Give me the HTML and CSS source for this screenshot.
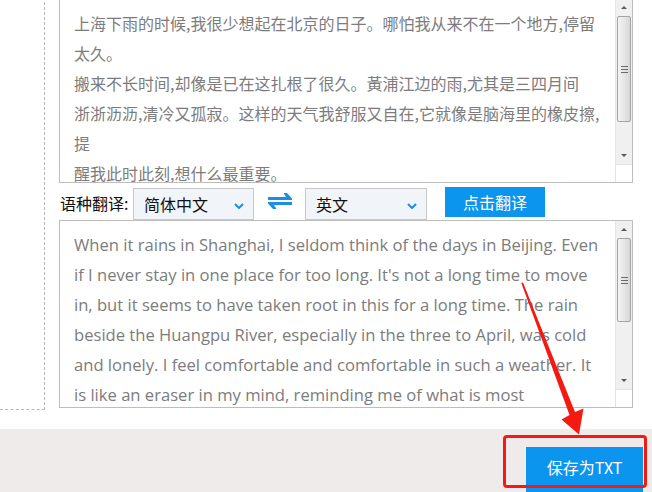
FILE: index.html
```html
<!DOCTYPE html>
<html lang="zh-CN">
<head>
<meta charset="utf-8">
<title>语种翻译</title>
<link rel="stylesheet" href="styles.css">
</head>
<body>
<div class="page">
  <div class="main">
    <div class="side"></div>
    <div class="content">
      <div class="box box-top">
        <div class="text zh">
          <div class="line">上海下雨的时候,我很少想起在北京的日子。哪怕我从来不在一个地方,停留</div>
          <div class="line">太久。</div>
          <div class="line">搬来不长时间,却像是已在这扎根了很久。黃浦江边的雨,尤其是三四月间</div>
          <div class="line">浙浙沥沥,清冷又孤寂。这样的天气我舒服又自在,它就像是脑海里的橡皮擦,</div>
          <div class="line">提</div>
          <div class="line">醒我此时此刻,想什么最重要。</div>
        </div>
        <div class="scrollbar sb-top">
          <div class="sb-btn"><span class="tri-up"></span></div>
          <div class="sb-thumb"><span class="grip"></span></div>
          <div class="sb-track"></div>
          <div class="sb-btn"><span class="tri-down"></span></div>
          <div class="sb-corner"></div>
        </div>
      </div>

      <div class="row">
        <span class="label">语种翻译:</span>
        <div class="select sel-1"><span>简体中文</span>
          <svg class="chev" width="10" height="6" viewBox="0 0 10 6"><path d="M1 1 L5 5 L9 1" fill="none" stroke="#1a8fe3" stroke-width="2"/></svg>
        </div>
        <svg class="swap" width="24" height="16" viewBox="0 0 24 16">
          <polygon points="0,4 18,4 15.5,0 19,0 24,5.5 24,7 0,7" fill="#1b8fe6"/>
          <polygon points="0,9 24,9 24,12 6,12 8.5,16 5,16 0,10.5" fill="#1b8fe6"/>
        </svg>
        <div class="select sel-2"><span>英文</span>
          <svg class="chev" width="10" height="6" viewBox="0 0 10 6"><path d="M1 1 L5 5 L9 1" fill="none" stroke="#1a8fe3" stroke-width="2"/></svg>
        </div>
        <button class="btn btn-translate">点击翻译</button>
      </div>

      <div class="box box-bottom">
        <div class="text en">
          <div class="line">When it rains in Shanghai, I seldom think of the days in Beijing. Even</div>
          <div class="line">if I never stay in one place for too long. It's not a long time to move</div>
          <div class="line">in, but it seems to have taken root in this for a long time. The rain</div>
          <div class="line">beside the Huangpu River, especially in the three to April, was cold</div>
          <div class="line">and lonely. I feel comfortable and comfortable in such a weather. It</div>
          <div class="line">is like an eraser in my mind, reminding me of what is most</div>
        </div>
        <div class="scrollbar sb-bottom">
          <div class="sb-btn"><span class="tri-up"></span></div>
          <div class="sb-thumb"><span class="grip"></span></div>
          <div class="sb-track"></div>
          <div class="sb-btn"><span class="tri-down"></span></div>
          <div class="sb-corner"></div>
        </div>
      </div>
    </div>
  </div>

  <div class="footer">
    <button class="btn btn-save">保存为TXT</button>
  </div>

  <div class="mark-box"></div>
  <svg class="mark-arrow" width="652" height="492" viewBox="0 0 652 492">
    <polygon points="521.3,283 523,282.6 575,412 583.5,408.5 579,434.5 561.5,419.5 569.5,415" fill="#f41a12"/>
  </svg>
</div>
</body>
</html>
```

FILE: styles.css
```css
* { box-sizing: border-box; }

html, body {
  margin: 0;
  padding: 0;
  background: #ffffff;
  overflow: hidden;
}

body {
  width: 652px;
  height: 492px;
  font-family: "Noto Sans CJK SC", "Open Sans", sans-serif;
}

.page {
  position: relative;
  width: 652px;
  height: 492px;
  overflow: hidden;
}

.main {
  display: flex;
  height: 432px;
  margin-top: -3px;
}

.side {
  width: 45px;
  height: 413px;
  border-right: 1px dashed #b9b9b9;
  border-bottom: 1px dashed #b9b9b9;
  flex: none;
}

.content {
  margin-left: 14px;
  width: 574px;
  display: flex;
  flex-direction: column;
}

.box {
  display: flex;
  border: 1px solid #bdbdbd;
  overflow: hidden;
  background: #fff;
}

.box-top { height: 186px; }
.box-bottom { height: 188px; }

.text {
  flex: 1;
  padding-left: 14px;
  color: #7c7c7c;
  font-size: 16px;
  line-height: 30px;
  white-space: nowrap;
  overflow: hidden;
}

.zh { padding-top: 10px; }
.en {
  padding-top: 9px;
  font-family: "Open Sans", "Noto Sans CJK SC", sans-serif;
  font-size: 16.6px;
}

.scrollbar {
  width: 17px;
  flex: none;
  display: flex;
  flex-direction: column;
  background: #f0f0f0;
  border-left: 1px solid #e6e6e6;
}

.sb-btn {
  height: 17px;
  flex: none;
  display: flex;
  align-items: center;
  justify-content: center;
}

.tri-up {
  width: 0; height: 0;
  border-left: 3px solid transparent;
  border-right: 3px solid transparent;
  border-bottom: 3px solid #5a5a5a;
}
.tri-down {
  width: 0; height: 0;
  border-left: 3px solid transparent;
  border-right: 3px solid transparent;
  border-top: 3px solid #5a5a5a;
}

.sb-thumb {
  flex: none;
  margin: 0 1px;
  border: 1px solid #a4a4a4;
  border-radius: 2px;
  background: linear-gradient(to right, #f4f4f4, #e4e4e4 60%, #d6d6d6);
  display: flex;
  align-items: center;
  justify-content: center;
}

.grip {
  width: 7px;
  height: 7px;
  background: repeating-linear-gradient(to bottom, #6a6a6a 0 1px, transparent 1px 3px);
}

.sb-track { flex: 1; }

.sb-corner {
  height: 18px;
  flex: none;
  background: #fff;
  border-top: 1px solid #e2e2e2;
  margin-left: -1px;
  border-left: 1px solid #e2e2e2;
}

.sb-top .sb-btn:first-child { height: 18px; }
.sb-top .sb-thumb { height: 106px; }
.sb-bottom .sb-thumb { height: 84px; }
.sb-bottom .sb-corner { height: 18px; }

.row {
  height: 37px;
  display: flex;
  align-items: flex-start;
  padding-top: 4px;
}

.label {
  width: 73px;
  margin-left: 1px;
  margin-top: 1px;
  line-height: 31px;
  font-size: 16px;
  color: #111;
}

.select {
  height: 32px;
  margin-top: 1px;
  border: 1px solid #c8c8c8;
  background: #f1f4f8;
  display: flex;
  align-items: center;
  justify-content: space-between;
  padding: 0 9px 0 10px;
  font-size: 16px;
  color: #111;
}

.sel-1 { width: 121px; }
.sel-2 { width: 122px; margin-left: 13px; }

.chev { margin-top: 3px; }

.swap {
  margin-left: 14px;
  margin-top: 6px;
  flex: none;
}

.btn {
  border: none;
  background: #0b95ef;
  color: #fff;
  font-family: "Noto Sans CJK SC", sans-serif;
  font-size: 16px;
  padding: 0;
  cursor: pointer;
}

.btn-translate {
  width: 100px;
  height: 30px;
  margin-left: 18px;
  line-height: 30px;
}

.footer {
  height: 63px;
  background: #efebea;
  display: flex;
  justify-content: flex-end;
  align-items: flex-start;
  padding-top: 18px;
  padding-right: 9px;
}

.btn-save {
  width: 117px;
  height: 46px;
  line-height: 38px;
  display: block;
  text-align: center;
  padding-bottom: 6px;
}

.mark-box {
  position: absolute;
  left: 503px;
  top: 435px;
  width: 144px;
  height: 53px;
  border: 3px solid #f41a12;
  border-radius: 4px;
}

.mark-arrow {
  position: absolute;
  left: 0;
  top: 0;
  pointer-events: none;
}
```
